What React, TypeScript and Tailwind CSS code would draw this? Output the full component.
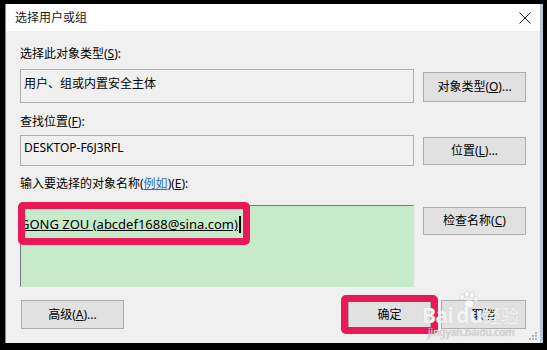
import React from 'react'

const font = { fontFamily: '"Noto Sans", "Noto Sans CJK SC", sans-serif' }

function Btn({ children, className = '' }: { children: React.ReactNode; className?: string }) {
  return (
    <div
      className={`relative flex items-center justify-center bg-[#e1e1e1] border border-[#adadad] text-[12px] text-black ${className}`}
    >
      {children}
    </div>
  )
}

function Highlight({ className }: { className: string }) {
  return <span className={`absolute border-[7px] border-[#eb1858] rounded-[5px] pointer-events-none ${className}`} />
}

export default function App() {
  return (
    <div className="w-[547px] h-[350px] bg-black overflow-hidden" style={font}>
      <div className="ml-[5px] mt-[4px] w-[538px] h-[339px] flex flex-col border-l border-[#8a8a8a] border-r-[3px] border-r-[#b7c8d4]">
        {/* title bar */}
        <div className="h-[27px] bg-white flex items-center justify-between pl-[9px] pr-[9px]">
          <span className="text-[12px] text-[#1a1a1a] leading-4">选择用户或组</span>
          <svg width="12" height="12" viewBox="0 0 12 12" className="mr-[0px]">
            <path d="M0.5 0.5 L11.5 11.5 M11.5 0.5 L0.5 11.5" stroke="#222" strokeWidth="1" />
          </svg>
        </div>

        {/* body */}
        <div className="relative flex-1 bg-[#f0f0f0] pl-[14px] text-[12px] text-black leading-4">
          <div className="mt-[15px]">
            选择此对象类型(<u>S</u>):
          </div>
          <div className="mt-[7px] flex gap-[9px]">
            <div className="w-[394px] h-[34px] border border-[#adadad] bg-[#f0f0f0] pl-[3px] pt-[6px]">
              用户、组或内置安全主体
            </div>
            <Btn className="mt-[3px] w-[103px] h-[30px]">
              对象类型(<u>O</u>)...
            </Btn>
          </div>

          <div className="mt-[11px]">
            查找位置(<u>F</u>):
          </div>
          <div className="mt-[5px] flex gap-[9px]">
            <div className="w-[394px] h-[31px] border border-[#adadad] bg-[#f0f0f0] pl-[3px] pt-[4px]">
              DESKTOP-F6J3RFL
            </div>
            <Btn className="mt-[2px] w-[103px] h-[28px]">
              位置(<u>L</u>)...
            </Btn>
          </div>

          <div className="mt-[10px]">
            输入要选择的对象名称(<u className="text-[#1d6fc4]">例如</u>)(<u>E</u>):
          </div>
          <div className="mt-[13px] flex gap-[9px]">
            <div className="relative w-[394px] h-[82px] border border-[#7a7a7a] border-r-[#c7eacb] border-b-[#c7eacb] bg-[#c7eacb]">
              <div className="overflow-hidden w-[240px] h-[20px] mt-[8px] flex items-center">
                <span className="-ml-[1px] text-[13px] underline whitespace-nowrap">GONG ZOU (abcdef1688@sina.com)</span>
                <span className="ml-[1px] w-[2px] h-[17px] bg-black" />
              </div>
              <Highlight className="-left-[3px] -top-[4px] w-[232px] h-[43px]" />
            </div>
            <Btn className="mt-[2px] w-[103px] h-[28px]">
              检查名称(<u>C</u>)
            </Btn>
          </div>

          <div className="mt-[13px] flex w-[506px] items-start">
            <Btn className="ml-[1px] w-[103px] h-[29px]">
              高级(<u>A</u>)...
            </Btn>
            <Btn className="ml-auto w-[83px] h-[29px]">
              确定
              <Highlight className="-inset-x-[8px] -inset-y-[6px]" />
            </Btn>
            <Btn className="ml-[10px] w-[85px] h-[29px]">取消</Btn>
          </div>

          {/* watermark */}
          <div className="absolute left-[412px] top-[259px] w-[110px] h-[48px] pointer-events-none text-white/80">
            <svg width="22" height="18" viewBox="0 0 22 18" className="absolute left-[39px] top-[1px]">
              <g fill="white" fillOpacity="0.75" stroke="#c8c8c8" strokeWidth="0.6">
                <ellipse cx="5" cy="6" rx="2.3" ry="3" />
                <ellipse cx="10" cy="3" rx="2.3" ry="3" />
                <ellipse cx="15" cy="4" rx="2.3" ry="3" />
                <ellipse cx="19" cy="8" rx="2" ry="2.6" />
                <ellipse cx="12" cy="13" rx="5" ry="4" />
              </g>
            </svg>
            <span
              className="absolute left-[4px] top-[13px] text-[21px] font-bold leading-6 tracking-tight"
              style={{ textShadow: '0 0 1px #bdbdbd' }}
            >
              Bai
            </span>
            <span
              className="absolute left-[38px] top-[13px] text-[21px] font-bold leading-6"
              style={{ textShadow: '0 0 1px #bdbdbd' }}
            >
              du
            </span>
            <span
              className="absolute left-[65px] top-[14px] text-[18px] leading-6"
              style={{ textShadow: '0 0 1px #bdbdbd' }}
            >
              经验
            </span>
            <span
              className="absolute left-[10px] top-[36px] text-[10px] leading-3 text-[#d8d8d8]"
              style={{ textShadow: '0 0 1px #aaa' }}
            >
              jingyan.baidu.com
            </span>
          </div>

          {/* resize grip */}
          <svg width="9" height="9" viewBox="0 0 9 9" className="absolute right-[2px] bottom-[2px]">
            <g fill="#b5b5b5">
              <rect x="6" y="0" width="2" height="2" />
              <rect x="3" y="3" width="2" height="2" />
              <rect x="6" y="3" width="2" height="2" />
              <rect x="0" y="6" width="2" height="2" />
              <rect x="3" y="6" width="2" height="2" />
              <rect x="6" y="6" width="2" height="2" />
            </g>
          </svg>
        </div>
      </div>
    </div>
  )
}
